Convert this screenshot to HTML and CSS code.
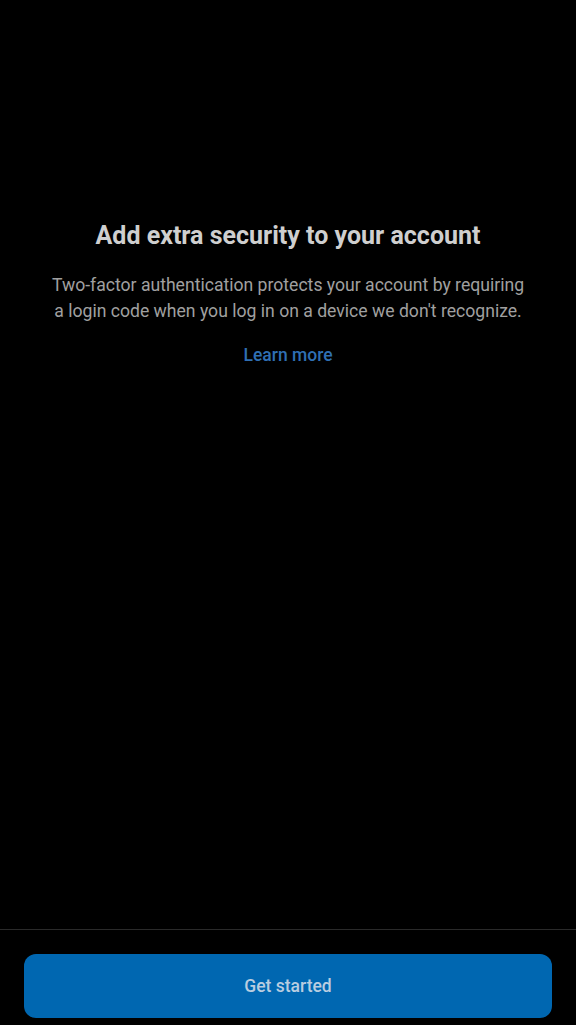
FILE: index.html
```html
<!DOCTYPE html>
<html>
<head>
<meta charset="utf-8">
<link rel="stylesheet" href="styles.css">
</head>
<body>
<div class="screen">
  <main class="content">
    <h1 class="title">Add extra security to your account</h1>
    <p class="desc">Two-factor authentication protects your account by requiring a login code when you log in on a device we don't recognize.</p>
    <a class="link" href="#">Learn more</a>
  </main>
  <footer class="footer">
    <button class="btn">Get started</button>
  </footer>
</div>
</body>
</html>
```
FILE: styles.css
```css
html, body {
  margin: 0;
  padding: 0;
  background: #000;
}
body {
  font-family: Roboto, "Liberation Sans", sans-serif;
}
.screen {
  width: 576px;
  height: 1025px;
  display: flex;
  flex-direction: column;
}
.content {
  flex: 1;
  display: flex;
  flex-direction: column;
  align-items: center;
  padding: 219px 48px 0;
}
.title {
  margin: 0;
  font-size: 25px;
  font-weight: 700;
  color: #cfcfcf;
  line-height: 34px;
  text-align: center;
}
.desc {
  margin: 19px 0 0;
  font-size: 17.6px;
  line-height: 26px;
  color: #a0a0a0;
  text-align: center;
}
.link {
  margin-top: 19px;
  font-size: 17.5px;
  font-weight: 500;
  color: #2f6fb3;
  text-decoration: none;
  line-height: 24px;
}
.footer {
  border-top: 1px solid #2a2a2a;
  padding: 24px 24px 7px;
}
.btn {
  display: block;
  width: 100%;
  height: 64px;
  border: none;
  border-radius: 12px;
  background: #0067b1;
  color: #b9cde0;
  font-family: Roboto, "Liberation Sans", sans-serif;
  font-size: 17.5px;
  font-weight: 500;
}
```
